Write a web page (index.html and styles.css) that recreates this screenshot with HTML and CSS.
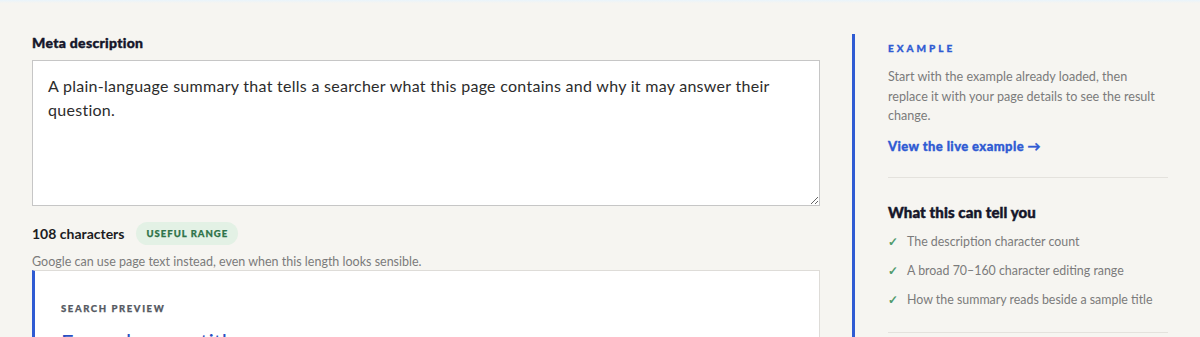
FILE: index.html
```html
<!DOCTYPE html>
<html lang="en">
<head>
<meta charset="utf-8">
<title>Meta description</title>
<link rel="stylesheet" href="styles.css">
</head>
<body>
<div class="topline"></div>
<main class="layout">
  <section class="editor">
    <label class="field-label" for="desc">Meta description</label>
    <textarea id="desc" class="desc">A plain-language summary that tells a searcher what this page contains and why it may answer their question.</textarea>
    <div class="count-row">
      <span class="count">108 characters</span>
      <span class="badge">USEFUL RANGE</span>
    </div>
    <p class="hint">Google can use page text instead, even when this length looks sensible.</p>
    <div class="preview">
      <div class="preview-label">SEARCH PREVIEW</div>
      <div class="preview-title">Example page title</div>
    </div>
  </section>
  <aside class="sidebar">
    <div class="eyebrow">EXAMPLE</div>
    <p class="side-text">Start with the example already loaded, then replace it with your page details to see the result change.</p>
    <a class="side-link" href="#">View the live example →</a>
    <hr class="divider">
    <h3 class="side-title">What this can tell you</h3>
    <ul class="checks">
      <li><span class="tick">✓</span>The description character count</li>
      <li><span class="tick">✓</span>A broad 70–160 character editing range</li>
      <li><span class="tick">✓</span>How the summary reads beside a sample title</li>
    </ul>
    <hr class="divider">
  </aside>
</main>
</body>
</html>
```
FILE: styles.css
```css
html, body {
  margin: 0;
  padding: 0;
}
body {
  background: #f6f5f1;
  font-family: Lato, "Noto Sans", sans-serif;
  color: #1b1c2b;
  height: 337px;
  overflow: hidden;
}
.topline {
  height: 3px;
  background: linear-gradient(#e9f4fb, #f6f5f1);
}
.layout {
  display: grid;
  grid-template-columns: 788px 316px;
  column-gap: 32px;
  padding: 31px 32px 0 32px;
}
.editor {
  display: flex;
  flex-direction: column;
}
.field-label {
  font-size: 14px;
  font-weight: 900;
  letter-spacing: 0.3px;
  -webkit-text-stroke: 0.4px #15162a;
  line-height: 18px;
  color: #15162a;
  margin-bottom: 8px;
}
.desc {
  box-sizing: border-box;
  width: 788px;
  height: 146px;
  margin: 0;
  padding: 13px 15px;
  border: 1px solid #c6c6c6;
  border-radius: 0;
  background: #fff;
  font-family: Lato, "Noto Sans", sans-serif;
  font-size: 16px;
  letter-spacing: 0.28px;
  line-height: 24px;
  color: #2c2c2c;
  resize: vertical;
}
.count-row {
  display: flex;
  align-items: center;
  gap: 12px;
  margin-top: 16px;
  height: 23px;
}
.count {
  font-size: 14px;
  font-weight: 700;
  color: #1b1c22;
}
.badge {
  display: inline-flex;
  align-items: center;
  height: 23px;
  padding: 0 10px;
  border-radius: 12px;
  background: #e3f1e5;
  color: #2f7349;
  font-size: 9.5px;
  font-weight: 900;
  letter-spacing: 1px;
  -webkit-text-stroke: 0.25px #2f7349;
}
.hint {
  margin: 9px 0 0 0;
  font-size: 12.5px;
  line-height: 16px;
  color: #7b7b7b;
}
.preview {
  background: #fff;
  border: 1px solid #dedcd8;
  border-left: 3px solid #2f5bd3;
  padding: 32px 26px 30px 26px;
  height: 120px;
}
.preview-label {
  font-size: 9.5px;
  font-weight: 900;
  letter-spacing: 1.6px;
  -webkit-text-stroke: 0.25px #555962;
  line-height: 12px;
  color: #555962;
}
.preview-title {
  margin-top: 14px;
  font-size: 22px;
  line-height: 26px;
  color: #2a4fc2;
}
.sidebar {
  border-left: 3px solid #2f5bd3;
  padding: 8px 0 0 33px;
  height: 320px;
}
.eyebrow {
  font-size: 10px;
  font-weight: 900;
  letter-spacing: 3px;
  -webkit-text-stroke: 0.3px #2f5bd3;
  line-height: 12px;
  color: #2f5bd3;
}
.side-text {
  margin: 13px 0 0 0;
  width: 270px;
  font-size: 12.6px;
  line-height: 19.5px;
  color: #7b7b7b;
}
.side-link {
  display: block;
  margin-top: 12px;
  font-size: 13px;
  letter-spacing: 0.4px;
  line-height: 16px;
  font-weight: 900;
  -webkit-text-stroke: 0.35px #2f5bd3;
  color: #2f5bd3;
  text-decoration: none;
}
.divider {
  width: 280px;
  margin: 23px 0 0 0;
  border: 0;
  border-top: 1px solid #e4e2dd;
}
.side-title {
  margin: 24px 0 0 0;
  font-size: 15px;
  line-height: 20px;
  font-weight: 900;
  letter-spacing: 0.1px;
  -webkit-text-stroke: 0.45px #15162a;
  color: #15162a;
}
.checks {
  list-style: none;
  margin: 5px 0 0 0;
  padding: 0;
}
.checks li {
  font-size: 12.4px;
  line-height: 29px;
  color: #7b7b7b;
  display: flex;
  align-items: center;
}
.tick {
  width: 19px;
  color: #4f9a6c;
  font-size: 12px;
  font-weight: 700;
}
.checks + .divider {
  margin-top: 18px;
}
```
